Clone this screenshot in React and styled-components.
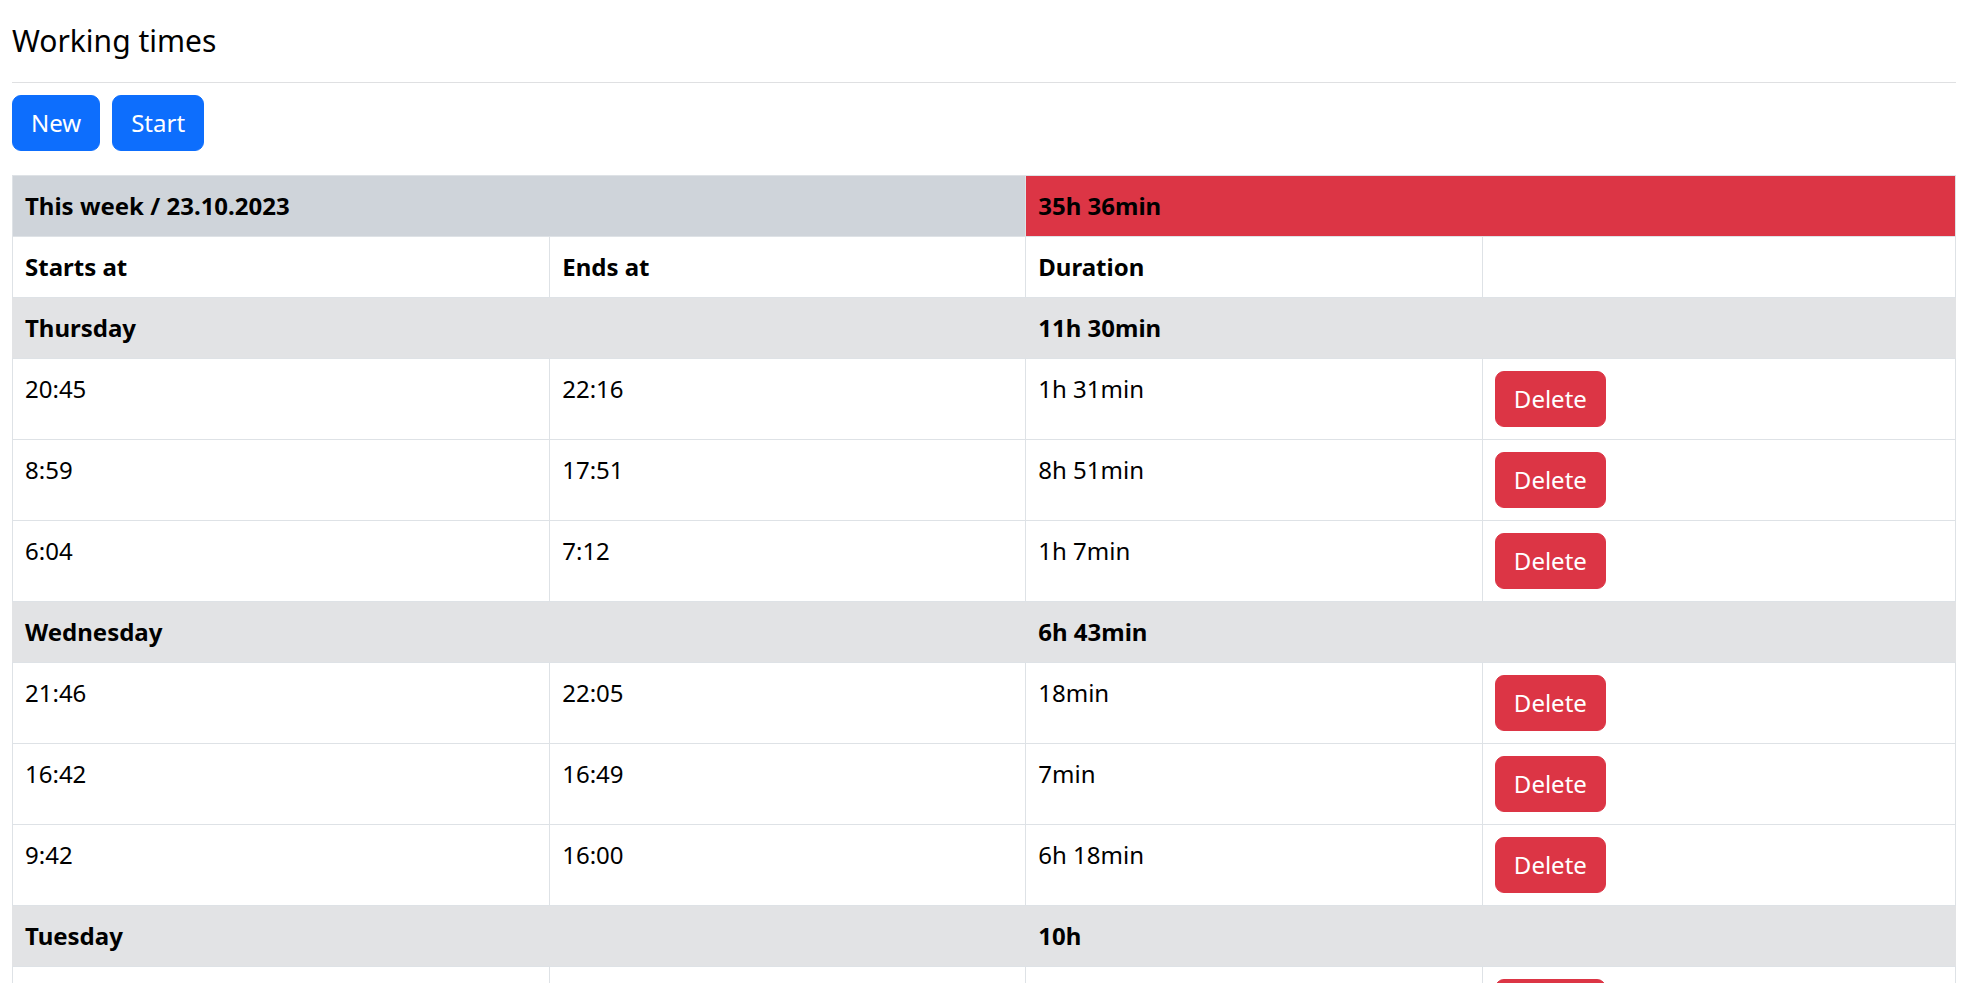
import React from 'react';
import styled, { createGlobalStyle } from 'styled-components';

const GlobalStyle = createGlobalStyle`
  body {
    margin: 0;
    background: #fff;
    color: #000;
    font-family: "Noto Sans", "Open Sans", sans-serif;
    font-size: 24px;
    line-height: 1.5;
  }
`;

const Page = styled.div`
  padding: 23px 12px 0;
`;

const Title = styled.h5`
  margin: 0;
  font-size: 30px;
  font-weight: 400;
  line-height: 36px;
  color: #000;
`;

const Divider = styled.hr`
  margin: 23px 0 12px;
  border: 0;
  border-top: 1px solid #dfe0e2;
`;

const Toolbar = styled.div`
  display: flex;
  gap: 12px;
  margin-bottom: 24px;
`;

const Button = styled.button`
  font-family: inherit;
  font-size: 24px;
  line-height: 36px;
  padding: 9px 18px;
  border-radius: 9px;
  border: 1px solid ${p => (p.$variant === 'danger' ? '#dc3545' : '#0d6efd')};
  background: ${p => (p.$variant === 'danger' ? '#dc3545' : '#0d6efd')};
  color: #fff;
  cursor: pointer;
`;

const Table = styled.table`
  width: 100%;
  border-collapse: collapse;
  table-layout: fixed;
`;

const Cell = styled.td`
  padding: 12px;
  vertical-align: top;
  text-align: left;
  border: 1px solid #dee2e6;
  font-weight: 400;
  color: #000;
`;

const HeadCell = styled(Cell).attrs({ as: 'th' })`
  font-weight: 700;
  background: ${p => p.$bg || '#fff'};
`;

const DayCell = styled(Cell)`
  font-weight: 700;
  background: #e2e3e5;
  border-left-color: #e2e3e5;
  border-right-color: #e2e3e5;
`;

const days = [
  {
    name: 'Thursday',
    total: '11h 30min',
    entries: [
      ['20:45', '22:16', '1h 31min'],
      ['8:59', '17:51', '8h 51min'],
      ['6:04', '7:12', '1h 7min'],
    ],
  },
  {
    name: 'Wednesday',
    total: '6h 43min',
    entries: [
      ['21:46', '22:05', '18min'],
      ['16:42', '16:49', '7min'],
      ['9:42', '16:00', '6h 18min'],
    ],
  },
  {
    name: 'Tuesday',
    total: '10h',
    entries: [
      ['13:00', '18:00', '5h'],
      ['7:30', '12:30', '5h'],
    ],
  },
];

export default function App() {
  return (
    <>
      <GlobalStyle />
      <Page>
        <Title>Working times</Title>
        <Divider />
        <Toolbar>
          <Button>New</Button>
          <Button>Start</Button>
        </Toolbar>
        <Table>
          <colgroup>
            <col style={{ width: '27.65%' }} />
            <col style={{ width: '24.5%' }} />
            <col style={{ width: '23.5%' }} />
            <col style={{ width: '24.35%' }} />
          </colgroup>
          <thead>
            <tr>
              <HeadCell colSpan={2} $bg="#cfd4da">This week / 23.10.2023</HeadCell>
              <HeadCell colSpan={2} $bg="#dc3545">35h 36min</HeadCell>
            </tr>
            <tr>
              <HeadCell>Starts at</HeadCell>
              <HeadCell>Ends at</HeadCell>
              <HeadCell>Duration</HeadCell>
              <HeadCell />
            </tr>
          </thead>
          <tbody>
            {days.map(day => (
              <React.Fragment key={day.name}>
                <tr>
                  <DayCell colSpan={2}>{day.name}</DayCell>
                  <DayCell colSpan={2}>{day.total}</DayCell>
                </tr>
                {day.entries.map(([start, end, dur]) => (
                  <tr key={start}>
                    <Cell>{start}</Cell>
                    <Cell>{end}</Cell>
                    <Cell>{dur}</Cell>
                    <Cell>
                      <Button $variant="danger">Delete</Button>
                    </Cell>
                  </tr>
                ))}
              </React.Fragment>
            ))}
          </tbody>
        </Table>
      </Page>
    </>
  );
}
